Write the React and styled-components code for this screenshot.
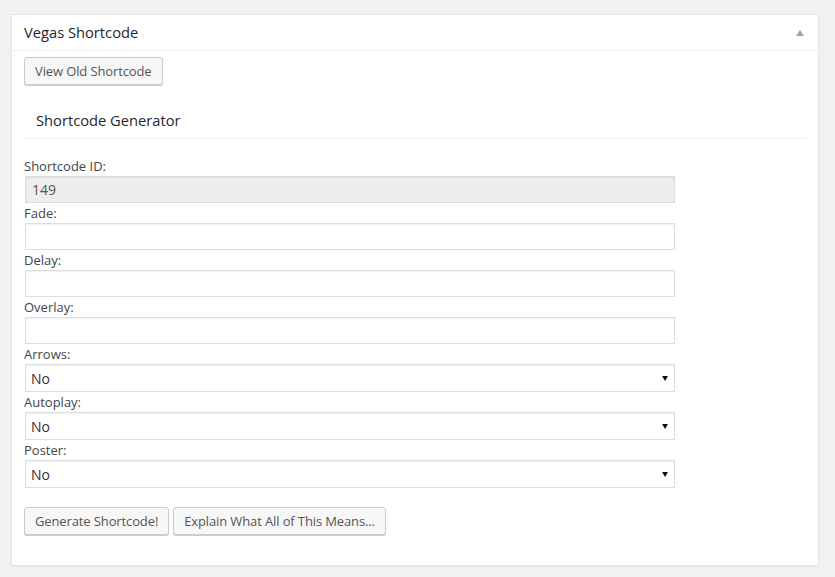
import React from "react";
import styled, { createGlobalStyle } from "styled-components";

const GlobalStyle = createGlobalStyle`
  html, body {
    margin: 0;
    padding: 0;
    background: #f1f1f1;
  }
  body {
    font-family: "Open Sans", "Liberation Sans", sans-serif;
    color: #444;
    font-size: 13px;
  }
`;

const Page = styled.div`
  padding: 14px 16px 11px 11px;
`;

const Postbox = styled.div`
  width: 808px;
  box-sizing: border-box;
  background: #fff;
  border: 1px solid #e5e5e5;
  box-shadow: 0 1px 1px rgba(0, 0, 0, 0.04);
`;

const Header = styled.div`
  display: flex;
  align-items: center;
  justify-content: space-between;
  height: 35px;
  padding: 0 12px;
  border-bottom: 1px solid #eee;
`;

const Title = styled.h2`
  margin: 0;
  font-size: 14.7px;
  font-weight: 400;
  color: #23282d;
  line-height: 1.4;
`;

const Toggle = styled.span`
  width: 0;
  height: 0;
  margin-right: 2px;
  border-left: 4px solid transparent;
  border-right: 4px solid transparent;
  border-bottom: 6px solid #a0a5aa;
`;

const Inside = styled.div`
  padding: 6px 12px 30px;
`;

const Button = styled.button`
  height: 28px;
  box-sizing: border-box;
  padding: 0 10px 1px;
  font-family: "Open Sans", "Liberation Sans", sans-serif;
  font-size: 13px;
  letter-spacing: -0.12px;
  line-height: 26px;
  color: #555;
  background: #f7f7f7;
  border: 1px solid #ccc;
  border-radius: 3px;
  box-shadow: 0 1px 0 #ccc;
  white-space: nowrap;
  cursor: pointer;
`;

const SectionTitle = styled.h3`
  margin: 18px 0 17px;
  padding: 8px 12px;
  font-size: 14.7px;
  font-weight: 400;
  line-height: 19px;
  color: #23282d;
  border-bottom: 1px solid #eee;
`;

const Form = styled.div`
  display: flex;
  flex-direction: column;
`;

const Label = styled.label`
  display: block;
  line-height: 20px;
  font-size: 13px;
  color: #444;
`;

const TextInput = styled.input`
  display: block;
  width: 650px;
  height: 27px;
  margin: 0 1px;
  box-sizing: border-box;
  padding: 0 6px;
  font-family: "Open Sans", "Liberation Sans", sans-serif;
  font-size: 14px;
  color: ${(p) => (p.readOnly ? "#555" : "#32373c")};
  background: ${(p) => (p.readOnly ? "#eee" : "#fff")};
  border: 1px solid #ddd;
  box-shadow: inset 0 1px 2px rgba(0, 0, 0, 0.07);
  outline: none;
`;

const SelectWrap = styled.div`
  position: relative;
  width: 650px;
  margin: 0 1px;
  &::after {
    content: "";
    position: absolute;
    right: 7px;
    top: 12px;
    border-left: 3px solid transparent;
    border-right: 3px solid transparent;
    border-top: 5px solid #111;
    pointer-events: none;
  }
`;

const Select = styled.select`
  display: block;
  width: 100%;
  height: 28px;
  box-sizing: border-box;
  padding: 0 5px;
  font-family: "Open Sans", "Liberation Sans", sans-serif;
  font-size: 14px;
  color: #333;
  background: #fff;
  border: 1px solid #ddd;
  box-shadow: inset 0 1px 2px rgba(0, 0, 0, 0.07);
  border-radius: 0;
  appearance: none;
  -webkit-appearance: none;
  outline: none;
`;

const Actions = styled.div`
  display: flex;
  gap: 4px;
  margin-top: 19px;
`;

const textFields = [
  { label: "Shortcode ID:", value: "149", readOnly: true },
  { label: "Fade:", value: "" },
  { label: "Delay:", value: "" },
  { label: "Overlay:", value: "" },
];

const selectFields = ["Arrows:", "Autoplay:", "Poster:"];

export default function App() {
  return (
    <>
      <GlobalStyle />
      <Page>
        <Postbox>
          <Header>
            <Title>Vegas Shortcode</Title>
            <Toggle />
          </Header>
          <Inside>
            <Button>View Old Shortcode</Button>
            <SectionTitle>Shortcode Generator</SectionTitle>
            <Form>
              {textFields.map((f) => (
                <React.Fragment key={f.label}>
                  <Label>{f.label}</Label>
                  <TextInput
                    readOnly={f.readOnly}
                    defaultValue={f.value}
                  />
                </React.Fragment>
              ))}
              {selectFields.map((label) => (
                <React.Fragment key={label}>
                  <Label>{label}</Label>
                  <SelectWrap>
                    <Select defaultValue="no">
                      <option value="no">No</option>
                      <option value="yes">Yes</option>
                    </Select>
                  </SelectWrap>
                </React.Fragment>
              ))}
            </Form>
            <Actions>
              <Button>Generate Shortcode!</Button>
              <Button>Explain What All of This Means...</Button>
            </Actions>
          </Inside>
        </Postbox>
      </Page>
    </>
  );
}
